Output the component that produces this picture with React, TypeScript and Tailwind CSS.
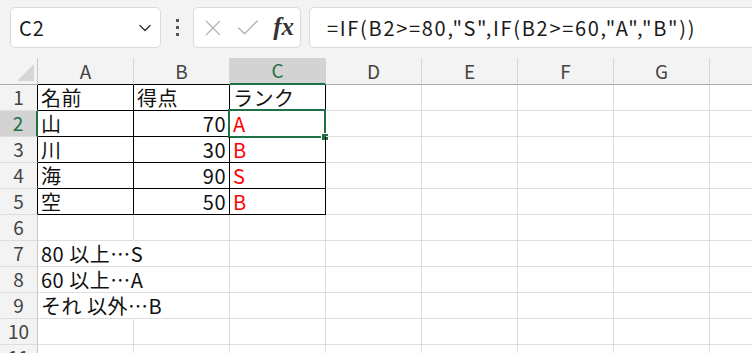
import React from "react";
import { ChevronDown, X, Check } from "lucide-react";

const cols = ["A", "B", "C", "D", "E", "F", "G", "H"];

type Cell = { text?: string; align?: "left" | "right"; red?: boolean; overflow?: boolean };

const data: Record<number, Cell[]> = {
  1: [{ text: "名前" }, { text: "得点" }, { text: "ランク" }],
  2: [{ text: "山" }, { text: "70", align: "right" }, { text: "A", red: true }],
  3: [{ text: "川" }, { text: "30", align: "right" }, { text: "B", red: true }],
  4: [{ text: "海" }, { text: "90", align: "right" }, { text: "S", red: true }],
  5: [{ text: "空" }, { text: "50", align: "right" }, { text: "B", red: true }],
  7: [{ text: "80 以上…S", overflow: true }],
  8: [{ text: "60 以上…A", overflow: true }],
  9: [{ text: "それ 以外…B", overflow: true }],
};

function borderClass(r: number, c: number) {
  const inTable = r <= 5 && c <= 2;
  const right = inTable ? "border-r-black" : "border-r-[#dedede]";
  const bottom = inTable ? "border-b-black" : "border-b-[#dedede]";
  const noRight = data[r]?.[c]?.overflow ? "border-r-transparent" : right;
  return `${noRight} ${bottom}`;
}

export default function App() {
  const rows = [1, 2, 3, 4, 5, 6, 7, 8, 9, 10, 11];
  return (
    <div className="w-[752px] h-[353px] overflow-hidden bg-white font-['Noto_Sans_CJK_JP',sans-serif] text-[#222]">
      {/* toolbar */}
      <div className="h-[58px] bg-[#f3f3f3] flex items-start pt-[7px] pl-[10px]">
        <div className="w-[151px] h-[41px] bg-white border border-[#dadada] rounded-[5px] flex items-center justify-between pl-[8px] pr-[5px]">
          <span className="text-[20px] text-[#1a1a1a] tracking-[1px]">C2</span>
          <ChevronDown size={20} strokeWidth={1.6} className="text-[#333]" />
        </div>
        <div className="w-[32px] h-[41px] flex flex-col items-center justify-center gap-[4px]">
          <span className="w-[3px] h-[3px] bg-[#555]" />
          <span className="w-[3px] h-[3px] bg-[#555]" />
          <span className="w-[3px] h-[3px] bg-[#555]" />
        </div>
        <div className="w-[108px] h-[41px] bg-white border border-[#dadada] rounded-[5px] flex items-center pl-[6px] pr-[6px]">
          <X size={26} strokeWidth={1.2} className="text-[#b4b4b4]" />
          <Check size={28} strokeWidth={1.2} className="text-[#b4b4b4] ml-[8px]" />
          <span className="ml-auto font-['Liberation_Serif',serif] italic font-bold text-[25px] text-[#333] leading-none pb-[2px]">
            fx
          </span>
        </div>
        <div className="ml-[8px] flex-1 -mr-[10px] h-[41px] bg-white border border-[#dadada] rounded-l-[5px] flex items-center pl-[17px]">
          <span className="text-[20px] text-[#1a1a1a] whitespace-nowrap tracking-[1.7px]">
            =IF(B2&gt;=80,"S",IF(B2&gt;=60,"A","B"))
          </span>
        </div>
      </div>

      {/* column header */}
      <div className="flex h-[27px] bg-[#f3f3f3]">
        <div className="w-[38px] shrink-0 border-r border-r-[#c8c8c8] border-b border-b-[#ababab] relative">
          <svg className="absolute left-[17px] top-[6px]" width="17" height="17" viewBox="0 0 17 17">
            <polygon points="17,0 17,17 0,17" fill="#d6d6d6" />
          </svg>
        </div>
        {cols.map((c, i) => {
          const sel = c === "C";
          const bottom = sel
            ? "border-b-2 border-b-[#1e7145]"
            : i <= 1
            ? "border-b border-b-black"
            : "border-b border-b-[#ababab]";
          return (
            <div
              key={c}
              className={`w-[96px] shrink-0 flex items-end justify-center pb-[1px] text-[19px] border-r border-r-[#d4d4d4] ${bottom} ${
                sel ? "bg-[#d3d3d3] text-[#1e7145]" : "text-[#444]"
              }`}
            >
              <span className="leading-[24px] pt-[4px]">{c}</span>
            </div>
          );
        })}
      </div>

      {/* rows */}
      {rows.map((r) => {
        const sel = r === 2;
        return (
          <div key={r} className="flex h-[26px]">
            <div
              className={`w-[38px] shrink-0 flex items-center justify-center text-[19px] border-b border-b-[#dedede] ${
                sel
                  ? "bg-[#d3d3d3] text-[#1e7145] border-r-2 border-r-[#1e7145]"
                  : r <= 5
                  ? "bg-[#f3f3f3] text-[#444] border-r border-r-black"
                  : "bg-[#f3f3f3] text-[#444] border-r border-r-[#c8c8c8]"
              }`}
            >
              {r}
            </div>
            {cols.map((c, ci) => {
              const cell = data[r]?.[ci];
              return (
                <div
                  key={c}
                  className={`relative w-[96px] shrink-0 border-r border-b flex items-center px-[3px] text-[20px] ${borderClass(r, ci)} ${
                    cell?.align === "right" ? "justify-end" : "justify-start"
                  }`}
                >
                  {cell?.text && (
                    <span
                      className={`whitespace-nowrap leading-none tracking-[0.5px] ${cell.red ? "text-[#ff0000]" : "text-[#111]"}`}
                    >
                      {cell.text}
                    </span>
                  )}
                  {r === 2 && c === "C" && (
                    <div className="absolute -left-[2px] -top-[2px] w-[98px] h-[29px] border-2 border-[#1e7145]">
                      <div className="absolute -right-[5px] -bottom-[5px] w-[8px] h-[8px] bg-[#1e7145] border border-white" />
                    </div>
                  )}
                </div>
              );
            })}
          </div>
        );
      })}
    </div>
  );
}
